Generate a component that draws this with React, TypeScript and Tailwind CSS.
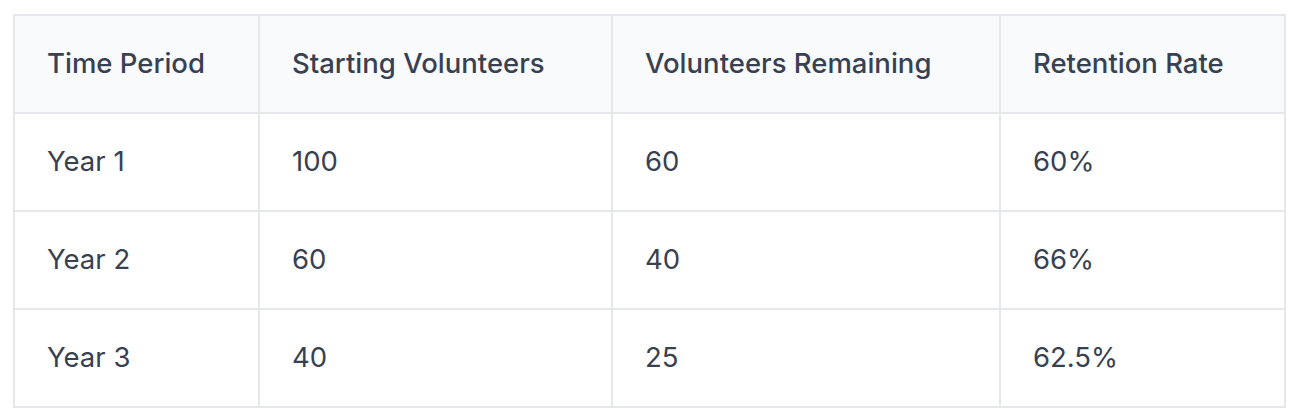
const headers = ["Time Period", "Starting Volunteers", "Volunteers Remaining", "Retention Rate"];

const rows = [
  ["Year 1", "100", "60", "60%"],
  ["Year 2", "60", "40", "66%"],
  ["Year 3", "40", "25", "62.5%"],
];

export default function App() {
  return (
    <div className="min-h-[420px] bg-white pl-[13px] pt-[14px] font-['Inter',sans-serif] text-[#374151]">
      <table className="w-[1271px] table-fixed border-collapse text-[27.5px]">
        <colgroup>
          <col className="w-[245px]" />
          <col className="w-[353px]" />
          <col className="w-[388px]" />
          <col className="w-[285px]" />
        </colgroup>
        <thead>
          <tr className="h-[98px] bg-[#f9fafb]">
            {headers.map((h) => (
              <th key={h} className="border-2 border-[#e5e7eb] px-[32px] text-left font-medium">
                {h}
              </th>
            ))}
          </tr>
        </thead>
        <tbody>
          {rows.map((r) => (
            <tr key={r[0]} className="h-[98px]">
              {r.map((c, i) => (
                <td key={i} className="border-2 border-[#e5e7eb] px-[32px] font-normal">
                  {c}
                </td>
              ))}
            </tr>
          ))}
        </tbody>
      </table>
    </div>
  );
}
